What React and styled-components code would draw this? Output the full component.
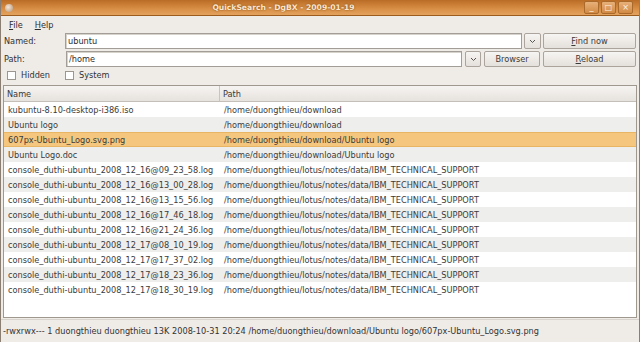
import React from "react"
import styled, { createGlobalStyle } from "styled-components"

const Global = createGlobalStyle`
	html, body {
		margin: 0;
		padding: 0;
		background: #efebe7;
	}
	body {
		font-family: "DejaVu Sans", "Liberation Sans", sans-serif;
		font-size: 8px;
		color: #333;
	}
`

const Window = styled.div`
	width: 640px;
	height: 342px;
	display: flex;
	flex-direction: column;
	background: #efebe7;
	box-sizing: border-box;
	border-left: 1px solid #8a7f72;
	border-right: 1px solid #8a7f72;
	overflow: hidden;
`

const TitleBar = styled.div`
	height: 15px;
	flex-shrink: 0;
	display: flex;
	align-items: center;
	padding: 0 6px 0 4px;
	background: linear-gradient(#b96c25, #d98f45 60%, #e2a35f);
	border-bottom: 1px solid #9c5c1e;

	.title {
		flex: 1;
		text-align: center;
		padding-right: 30px;
		font-weight: bold;
		font-size: 7.6px;
		color: #fbe6cd;
		text-shadow: 0 0 2px #7a4410;
	}
`

const AppIcon = styled.div`
	width: 8px;
	height: 8px;
	border-radius: 50%;
	background: radial-gradient(circle at 40% 40%, #f4e6d6, #b39476);
`

const Controls = styled.div`
	display: flex;
	gap: 2px;
`

const WinButton = styled.div`
	width: 13px;
	height: 11px;
	border: 1px solid #a96a2b;
	border-radius: 2px;
	background: linear-gradient(#e7b07a, #d28b45);
	display: flex;
	align-items: center;
	justify-content: center;
	color: #fff3e4;
	font-size: 8px;
	line-height: 1;
`

const MenuBar = styled.div`
	height: 17px;
	flex-shrink: 0;
	display: flex;
	align-items: center;
	gap: 12px;
	padding: 0 8px;
	font-size: 8.2px;
	color: #2e2e2e;

	u {
		text-decoration: underline;
	}
`

const Form = styled.div`
	display: flex;
	flex-direction: column;
	gap: 2px;
	padding: 0 3px;
`

const Row = styled.div`
	display: flex;
	align-items: center;
	height: 16px;
	gap: ${p => p.gap || 2}px;
`

const Label = styled.div`
	width: 59px;
	font-size: 8.2px;
	flex-shrink: 0;
`

const Field = styled.div`
	flex: 1;
	height: 16px;
	box-sizing: border-box;
	background: #fff;
	border: 1px solid #a29d96;
	box-shadow: inset 1px 1px 0 #d6d2cc;
	display: flex;
	align-items: center;
	padding-left: 2px;
	font-size: 8.2px;
	color: #2c2c2c;
`

const Button = styled.div`
	width: ${p => p.w}px;
	height: 16px;
	flex-shrink: 0;
	box-sizing: border-box;
	border: 1px solid #aaa49c;
	border-radius: 2px;
	background: linear-gradient(#f7f5f3, #e4e0db);
	display: flex;
	align-items: center;
	justify-content: center;
	font-size: 8.2px;
	color: #3a3a3a;

	u {
		text-decoration: underline;
	}
`

const Chevron = () => (
	<svg width="7" height="5" viewBox="0 0 7 5">
		<path d="M1 1 L3.5 3.5 L6 1" fill="none" stroke="#555" strokeWidth="1" />
	</svg>
)

const CheckRow = styled.div`
	display: flex;
	align-items: center;
	height: 14px;
	padding: 1px 0 0 6px;
	font-size: 8.2px;
`

const Check = styled.label`
	display: flex;
	align-items: center;
	gap: 5px;
	width: 58px;

	span.box {
		width: 7px;
		height: 7px;
		border: 1px solid #9c968e;
		background: #fff;
	}
`

const Table = styled.div`
	flex: 1;
	margin: 3px 2px 1px 2px;
	border: 1px solid #9e988f;
	background: #fff;
	display: flex;
	flex-direction: column;
	overflow: hidden;
`

const Header = styled.div`
	display: grid;
	grid-template-columns: 216px 1fr;
	height: 15px;
	flex-shrink: 0;
	background: linear-gradient(#f6f4f2, #e6e2dd);
	border-bottom: 1px solid #c4bfb8;
	font-size: 8.2px;
	color: #3a3a3a;

	div {
		display: flex;
		align-items: center;
		padding-left: 3px;
	}
	div:first-child {
		border-right: 1px solid #c9c4bd;
	}
`

const Line = styled.div`
	display: grid;
	grid-template-columns: 216px 1fr;
	height: 15px;
	box-sizing: border-box;
	font-size: 8.2px;
	color: #3b3b3b;
	white-space: nowrap;
	background: ${p => (p.selected ? "#f5c77e" : p.odd ? "#eeeeec" : "#fff")};
	border-top: 1px solid ${p => (p.selected ? "#e7b564" : "transparent")};
	border-bottom: 1px solid ${p => (p.selected ? "#e7b564" : "transparent")};

	div {
		display: flex;
		align-items: center;
		padding-left: 4px;
		overflow: hidden;
	}
`

const StatusBar = styled.div`
	height: 22px;
	flex-shrink: 0;
	display: flex;
	align-items: center;
	padding-left: 2px;
	font-size: 8.2px;
	color: #333;
	border-top: 1px solid #d8d3cd;
`

const dl = "/home/duongthieu/download"
const ibm = "/home/duongthieu/lotus/notes/data/IBM_TECHNICAL_SUPPORT"

const files = [
	["kubuntu-8.10-desktop-i386.iso", dl],
	["Ubuntu logo", dl],
	["607px-Ubuntu_Logo.svg.png", dl + "/Ubuntu logo"],
	["Ubuntu Logo.doc", dl + "/Ubuntu logo"],
	["console_duthi-ubuntu_2008_12_16@09_23_58.log", ibm],
	["console_duthi-ubuntu_2008_12_16@13_00_28.log", ibm],
	["console_duthi-ubuntu_2008_12_16@13_15_56.log", ibm],
	["console_duthi-ubuntu_2008_12_16@17_46_18.log", ibm],
	["console_duthi-ubuntu_2008_12_16@21_24_36.log", ibm],
	["console_duthi-ubuntu_2008_12_17@08_10_19.log", ibm],
	["console_duthi-ubuntu_2008_12_17@17_37_02.log", ibm],
	["console_duthi-ubuntu_2008_12_17@18_23_36.log", ibm],
	["console_duthi-ubuntu_2008_12_17@18_30_19.log", ibm],
]

const App = () => {
	return (
		<Window>
			<Global />
			<TitleBar>
				<AppIcon />
				<div className="title">QuickSearch - DgBX - 2009-01-19</div>
				<Controls>
					<WinButton>_</WinButton>
					<WinButton>□</WinButton>
					<WinButton>×</WinButton>
				</Controls>
			</TitleBar>
			<MenuBar>
				<span><u>F</u>ile</span>
				<span><u>H</u>elp</span>
			</MenuBar>
			<Form>
				<Row>
					<Label>Named:</Label>
					<Field>ubuntu</Field>
					<Button w={17}><Chevron /></Button>
					<Button w={93}><span><u>F</u>ind now</span></Button>
				</Row>
				<Row gap={3}>
					<Label>Path:</Label>
					<Field>/home</Field>
					<Button w={16}><Chevron /></Button>
					<Button w={56}>Browser</Button>
					<Button w={93}><span><u>R</u>eload</span></Button>
				</Row>
			</Form>
			<CheckRow>
				<Check><span className="box" />Hidden</Check>
				<Check><span className="box" />System</Check>
			</CheckRow>
			<Table>
				<Header>
					<div>Name</div>
					<div>Path</div>
				</Header>
				{files.map((f, i) => (
					<Line key={f[0]} odd={i % 2 === 1} selected={i === 2}>
						<div>{f[0]}</div>
						<div>{f[1]}</div>
					</Line>
				))}
			</Table>
			<StatusBar>
				-rwxrwx--- 1 duongthieu duongthieu 13K 2008-10-31 20:24 /home/duongthieu/download/Ubuntu logo/607px-Ubuntu_Logo.svg.png
			</StatusBar>
		</Window>
	)
}

export default App
